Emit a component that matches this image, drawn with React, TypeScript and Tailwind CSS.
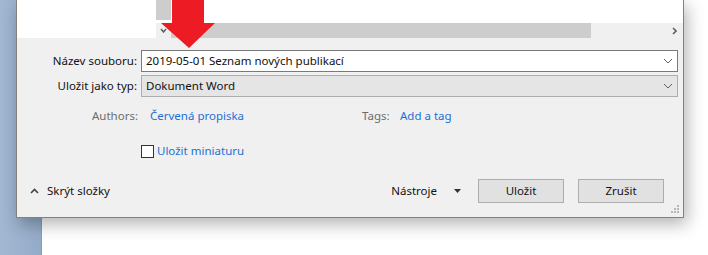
import React from 'react';

const font = { fontFamily: '"Noto Sans", "Open Sans", sans-serif' };

const Chevron: React.FC = () => (
  <svg width="10" height="6" viewBox="0 0 10 6" className="mr-[4px]">
    <path d="M1 1 L5 5 L9 1" fill="none" stroke="#606060" strokeWidth="1" />
  </svg>
);

const Grip: React.FC = () => (
  <svg width="9" height="9" viewBox="0 0 9 9" className="absolute right-[3px] bottom-[3px]">
    {[[6, 0], [3, 3], [6, 3], [0, 6], [3, 6], [6, 6]].map(([x, y]) => (
      <rect key={`${x}-${y}`} x={x} y={y} width="2" height="2" fill="#b8b8b8" />
    ))}
  </svg>
);

export default function App() {
  return (
    <div className="relative w-[708px] h-[255px] bg-white overflow-hidden text-[11.5px] text-[#111]" style={font}>
      {/* desktop behind */}
      <div className="flex h-full">
        <div className="w-[42px] h-full bg-gradient-to-r from-[#a3b8d3] to-[#94abc8] border-r border-[#9a9a9a]" />
        <div className="flex-1 bg-white" />
      </div>

      {/* dialog window */}
      <div className="absolute left-[16px] top-0 w-[668px] h-[218px] bg-[#f0f0f0] border-l border-r border-b border-[#85807a] shadow-[3px_6px_16px_rgba(0,0,0,0.3)] flex flex-col">
        {/* file list area with scrollbars */}
        <div className="flex h-[38px]">
          <div className="w-[139px] bg-white" />
          <div className="flex-1 flex flex-col">
            <div className="flex h-[23px] bg-white">
              <div className="w-[15px] h-[20px] bg-[#cdcdcd]" />
            </div>
            <div className="flex h-[15px] items-center">
              <div className="w-[15px] flex justify-center">
                <svg width="7" height="5" viewBox="0 0 7 5">
                  <path d="M1 1 L3.5 4 L6 1" fill="none" stroke="#606060" strokeWidth="1.5" />
                </svg>
              </div>
              <div className="w-[420px] h-full bg-[#cdcdcd]" />
              <div className="flex-1 flex justify-end pr-[6px]">
                <svg width="5" height="8" viewBox="0 0 5 8">
                  <path d="M1 1 L4 4 L1 7" fill="none" stroke="#606060" strokeWidth="1.6" />
                </svg>
              </div>
            </div>
          </div>
        </div>

        {/* form */}
        <div className="flex items-center mt-[12px] h-[22px]">
          <div className="w-[120px] text-right">Název souboru:</div>
          <div className="ml-[4px] w-[537px] h-[22px] bg-white border border-[#7a7a7a] flex items-center justify-between pl-[4px]">
            <span>2019-05-01 Seznam nových publikací</span>
            <Chevron />
          </div>
        </div>
        <div className="flex items-center mt-[3px] h-[22px]">
          <div className="w-[120px] text-right">Uložit jako typ:</div>
          <div className="ml-[4px] w-[537px] h-[22px] bg-[#e5e5e5] border border-[#adadad] flex items-center justify-between pl-[4px]">
            <span>Dokument Word</span>
            <Chevron />
          </div>
        </div>

        <div className="flex items-center mt-[10px] h-[18px]">
          <div className="w-[121px] text-right text-[#6d6d6d]">Authors:</div>
          <div className="ml-[12px] w-[212px] text-[#1d6fd6]">Červená propiska</div>
          <div className="w-[38px] text-[#6d6d6d]">Tags:</div>
          <div className="text-[#1d6fd6]">Add a tag</div>
        </div>

        <div className="flex items-center mt-[19px] h-[14px]">
          <div className="ml-[124px] w-[13px] h-[13px] bg-white border border-[#333]" />
          <span className="ml-[3px] text-[#1d6fd6]">Uložit miniaturu</span>
        </div>

        <div className="flex items-center mt-[21px] h-[24px]">
          <svg width="9" height="6" viewBox="0 0 9 6" className="ml-[13px]">
            <path d="M1 5 L4.5 1.5 L8 5" fill="none" stroke="#444" strokeWidth="1.6" />
          </svg>
          <span className="ml-[8px]">Skrýt složky</span>
          <div className="flex-1" />
          <span>Nástroje</span>
          <svg width="7" height="4" viewBox="0 0 7 4" className="ml-[17px]">
            <path d="M0 0 L7 0 L3.5 4 Z" fill="#333" />
          </svg>
          <button className="ml-[17px] w-[86px] h-[24px] bg-[#e1e1e1] border border-[#adadad]">Uložit</button>
          <button className="ml-[14px] mr-[19px] w-[86px] h-[24px] bg-[#e1e1e1] border border-[#adadad]">Zrušit</button>
        </div>

        <Grip />
      </div>

      {/* red annotation arrow */}
      <svg width="56" height="50" viewBox="0 0 56 50" className="absolute left-[160px] top-0">
        <path d="M12 0 L44 0 L44 23 L55 23 L29 48 L1 23 L12 23 Z" fill="#ed1c24" />
      </svg>
    </div>
  );
}
